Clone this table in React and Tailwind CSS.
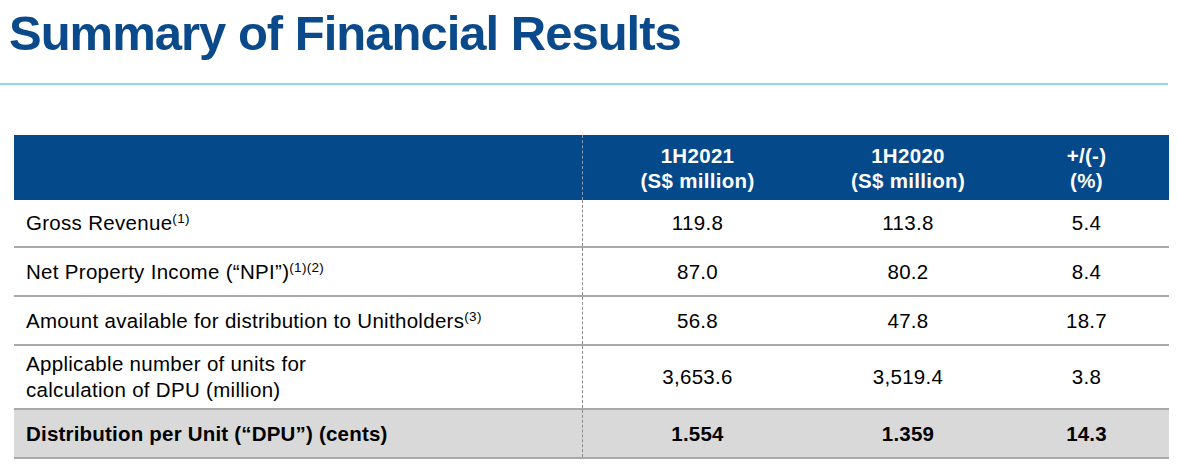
import React from "react";

const rows = [
  { label: <>Gross Revenue<sup className="text-[13.5px]">(1)</sup></>, a: "119.8", b: "113.8", c: "5.4", h: "h-[48px]" },
  { label: <>Net Property Income (“NPI”)<sup className="text-[13.5px]">(1)(2)</sup></>, a: "87.0", b: "80.2", c: "8.4", h: "h-[49px]" },
  { label: <>Amount available for distribution to Unitholders<sup className="text-[13.5px]">(3)</sup></>, a: "56.8", b: "47.8", c: "18.7", h: "h-[49px]" },
  { label: <>Applicable number of units for<br />calculation of DPU (million)</>, a: "3,653.6", b: "3,519.4", c: "3.8", h: "h-[64px]" },
];

export default function App() {
  return (
    <div className="w-[1177px] h-[467px] bg-white overflow-hidden font-['Liberation_Sans',Arial,sans-serif] text-black">
      <h1 className="pl-[9px] pt-[9px] text-[49px] leading-[48px] font-bold text-[#0a4a8b] tracking-[-1px] whitespace-nowrap">
        Summary of Financial Results
      </h1>
      <div className="mt-[26px] h-[2px] w-[1168px] bg-[#95d3f2]" />
      <div className="mt-[50px] ml-[14px] w-[1155px]">
        <div className="grid grid-cols-[568px_230px_192px_165px] h-[65px] bg-[#04498a] text-white font-bold text-[20.5px] leading-[25px] tracking-[0.3px]">
          <div />
          <div className="border-l border-dashed border-[#8d9bb0] flex items-center justify-center text-center">
            <div>1H2021<br />(S$ million)</div>
          </div>
          <div className="flex items-center justify-center text-center">
            <div>1H2020<br />(S$ million)</div>
          </div>
          <div className="flex items-center justify-center text-center">
            <div>+/(-)<br />(%)</div>
          </div>
        </div>
        {rows.map((r, i) => (
          <div
            key={i}
            className={`grid grid-cols-[568px_230px_192px_165px] ${r.h} border-b-2 border-[#a9a9a9] text-[20.5px] leading-[26px] tracking-[0.3px]`}
          >
            <div className="flex items-center pl-[12px]">
              <div>{r.label}</div>
            </div>
            <div className="border-l border-dashed border-[#8c8c8c] flex items-center justify-center">{r.a}</div>
            <div className="flex items-center justify-center">{r.b}</div>
            <div className="flex items-center justify-center">{r.c}</div>
          </div>
        ))}
        <div className="grid grid-cols-[568px_230px_192px_165px] h-[49px] bg-[#d9d9d9] border-b-2 border-[#a9a9a9] text-[20.5px] leading-[26px] font-bold tracking-[0.2px]">
          <div className="flex items-center pl-[12px]">Distribution per Unit (“DPU”) (cents)</div>
          <div className="border-l border-dashed border-[#8c8c8c] flex items-center justify-center">1.554</div>
          <div className="flex items-center justify-center">1.359</div>
          <div className="flex items-center justify-center">14.3</div>
        </div>
      </div>
    </div>
  );
}
